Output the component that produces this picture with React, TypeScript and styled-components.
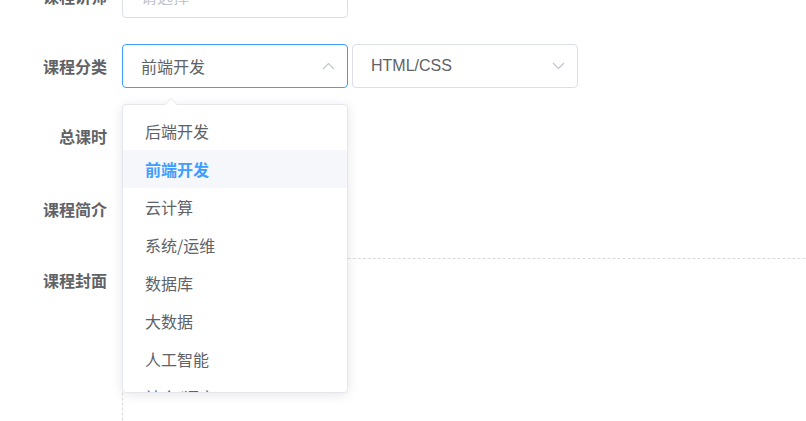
import * as React from "react";
import { createGlobalStyle, styled } from "styled-components";

const GlobalStyle = createGlobalStyle`
  html, body {
    margin: 0;
    padding: 0;
    background: #ffffff;
    overflow: hidden;
  }
  body {
    font-family: "Liberation Sans", "Noto Sans CJK SC", sans-serif;
    color: #606266;
  }
`;

const categories = [
  "后端开发",
  "前端开发",
  "云计算",
  "系统/运维",
  "数据库",
  "大数据",
  "人工智能",
  "社会/语言",
];

const Chevron: React.FC<{ up?: boolean }> = ({ up }) => (
  <svg width="13" height="8" viewBox="0 0 13 8" fill="none">
    <path
      d={up ? "M1 7L6.5 1.5L12 7" : "M1 1L6.5 6.5L12 1"}
      stroke="#c0c4cc"
      strokeWidth="1.2"
    />
  </svg>
);

export default function App() {
  const [active] = React.useState("前端开发");

  return (
    <>
      <GlobalStyle />
      <Form>
        <FormItem $h={44}>
          <Label>课程讲师</Label>
          <Select>
            <Placeholder>请选择</Placeholder>
          </Select>
        </FormItem>

        <FormItem $h={44}>
          <Label>课程分类</Label>
          <SelectGroup>
            <SelectWrap>
              <Select $focused>
                <Value>前端开发</Value>
                <Chevron up />
              </Select>
              <Dropdown>
                <DropdownList>
                  {categories.map((c) => (
                    <Option key={c} $active={c === active}>
                      {c}
                    </Option>
                  ))}
                </DropdownList>
              </Dropdown>
            </SelectWrap>
            <Select>
              <Value>HTML/CSS</Value>
              <Chevron />
            </Select>
          </SelectGroup>
        </FormItem>

        <FormItem $h={47}>
          <Label>总课时</Label>
          <InputNumber />
        </FormItem>

        <FormItem $h={45}>
          <Label>课程简介</Label>
          <Textarea />
        </FormItem>

        <FormItem $h={200}>
          <Label>课程封面</Label>
          <UploadBox />
        </FormItem>
      </Form>
    </>
  );
}

const Form = styled.div`
  display: flex;
  flex-direction: column;
  gap: 26px;
  margin-top: -26px;
`;

const FormItem = styled.div<{ $h: number }>`
  display: flex;
  align-items: flex-start;
  gap: 15px;
  height: ${({ $h }) => $h}px;
`;

const Label = styled.label`
  width: 107px;
  flex-shrink: 0;
  text-align: right;
  font-family: "Noto Sans CJK SC", sans-serif;
  font-size: 16px;
  font-weight: 700;
  line-height: 44px;
  color: #606266;
`;

const SelectGroup = styled.div`
  display: flex;
  gap: 4px;
`;

const SelectWrap = styled.div`
  position: relative;
`;

const Select = styled.div<{ $focused?: boolean }>`
  box-sizing: border-box;
  width: 226px;
  height: 44px;
  padding: 0 12px 0 18px;
  display: flex;
  align-items: center;
  justify-content: space-between;
  border: 1px solid ${({ $focused }) => ($focused ? "#409eff" : "#dcdfe6")};
  border-radius: 4px;
  background: #ffffff;
`;

const Value = styled.span`
  font-size: 16px;
  color: #606266;
  font-family: "Liberation Sans", "Noto Sans CJK SC", sans-serif;
`;

const Placeholder = styled(Value)`
  color: #c0c4cc;
`;

const Dropdown = styled.div`
  position: absolute;
  top: calc(100% + 16px);
  left: 0;
  z-index: 10;
  box-sizing: border-box;
  width: 226px;
  height: 289px;
  border: 1px solid #e4e7ed;
  border-radius: 4px;
  background: #ffffff;
  box-shadow: 0 2px 12px rgba(0, 0, 0, 0.1);

  &::before,
  &::after {
    content: "";
    position: absolute;
    left: 42px;
    width: 0;
    height: 0;
    border: 6px solid transparent;
    border-top-width: 0;
  }
  &::before {
    top: -7px;
    border-bottom-color: #e4e7ed;
  }
  &::after {
    top: -6px;
    border-bottom-color: #ffffff;
  }
`;

const DropdownList = styled.ul`
  list-style: none;
  margin: 0;
  padding: 7px 0 0;
  height: 100%;
  box-sizing: border-box;
  overflow: hidden;
  border-radius: 4px;
`;

const Option = styled.li<{ $active?: boolean }>`
  height: 38px;
  line-height: 38px;
  padding: 0 22px;
  font-family: "Noto Sans CJK SC", sans-serif;
  font-size: 16px;
  color: ${({ $active }) => ($active ? "#409eff" : "#606266")};
  font-weight: ${({ $active }) => ($active ? 700 : 400)};
  background: ${({ $active }) => ($active ? "#f5f7fa" : "transparent")};
`;

const InputNumber = styled.div`
  box-sizing: border-box;
  width: 200px;
  height: 44px;
  border: 1px solid #dcdfe6;
  border-radius: 4px;
`;

const Textarea = styled.div`
  box-sizing: border-box;
  width: 220px;
  height: 45px;
  border: 1px solid #dcdfe6;
  border-radius: 4px;
`;

const UploadBox = styled.div`
  box-sizing: border-box;
  width: 760px;
  height: 200px;
  border: 1px dashed #d9d9d9;
  border-radius: 6px;
  flex-shrink: 0;
`;
